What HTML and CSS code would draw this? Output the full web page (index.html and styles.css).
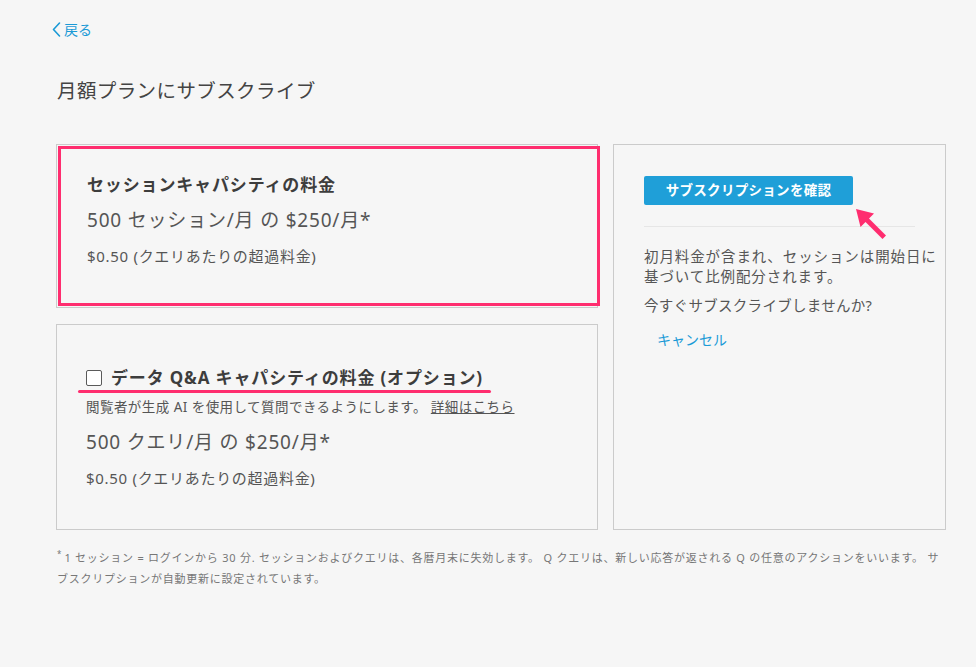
FILE: index.html
```html
<!DOCTYPE html>
<html lang="ja">
<head>
<meta charset="utf-8">
<link rel="stylesheet" href="styles.css">
</head>
<body>
<div class="page">
  <a class="back" href="#">
    <svg class="back-icon" width="9" height="15" viewBox="0 0 9 15"><path d="M7.5 1 L1.5 7.5 L7.5 14" fill="none" stroke="#1a9ad6" stroke-width="1.6" stroke-linecap="round" stroke-linejoin="round"/></svg>
    <span>戻る</span>
  </a>
  <h1 class="title">月額プランにサブスクライブ</h1>

  <div class="layout">
    <div class="left">
      <div class="card card-session">
        <div class="highlight"></div>
        <div class="card-title">セッションキャパシティの料金</div>
        <div class="price">500 セッション/月 の $250/月*</div>
        <div class="overage">$0.50 (クエリあたりの超過料金)</div>
      </div>
      <div class="card card-qa">
        <div class="check-row">
          <span class="checkbox"></span>
          <span class="card-title">データ Q&amp;A キャパシティの料金 (オプション)</span>
          <span class="underline"></span>
        </div>
        <div class="desc">閲覧者が生成 AI を使用して質問できるようにします。 <a class="more" href="#">詳細はこちら</a></div>
        <div class="price">500 クエリ/月 の $250/月*</div>
        <div class="overage">$0.50 (クエリあたりの超過料金)</div>
      </div>
    </div>

    <div class="card side">
      <button class="confirm">サブスクリプションを確認</button>
      <svg class="arrow" width="40" height="40" viewBox="0 0 40 40"><path d="M1 1 L19 5.5 L14 10.5 L31 27.5 L27.5 31 L10.5 14 L5.5 19 Z" fill="#ff2d6f"/></svg>
      <hr class="sep">
      <p class="note">初月料金が含まれ、セッションは開始日に<br>基づいて比例配分されます。</p>
      <p class="note short">今すぐサブスクライブしませんか?</p>
      <a class="cancel" href="#">キャンセル</a>
    </div>
  </div>

  <p class="footnote"><span class="star">*</span>1 セッション = ログインから 30 分. セッションおよびクエリは、各暦月末に失効します。 Q クエリは、新しい応答が返される Q の任意のアクションをいいます。 サ<br>ブスクリプションが自動更新に設定されています。</p>
</div>
</body>
</html>
```

FILE: styles.css
```css
* { box-sizing: border-box; }
html, body {
  margin: 0;
  padding: 0;
  background: #f6f6f6;
}
body {
  font-family: "Noto Sans", "Noto Sans CJK JP", sans-serif;
  color: #444;
  width: 976px;
  height: 667px;
  overflow: hidden;
}
.page {
  padding: 20px 0 0 56px;
}
.back {
  display: inline-flex;
  align-items: center;
  gap: 3px;
  margin-left: -4px;
  color: #1a9ad6;
  text-decoration: none;
  font-size: 14px;
  line-height: 18px;
}
.back-icon { display: block; }
.title {
  margin: 36px 0 0 1px;
  font-size: 19.5px;
  font-weight: 400;
  line-height: 26px;
  color: #444;
  letter-spacing: 0.4px;
}
.layout {
  margin-top: 40px;
  display: grid;
  grid-template-columns: 542px 333px;
  column-gap: 15px;
}
.left {
  display: flex;
  flex-direction: column;
  gap: 16px;
}
.card {
  position: relative;
  border: 1px solid #cbcbcb;
  background: #f6f6f6;
}
.card-session {
  height: 164px;
  padding: 28px 30px 0 30px;
}
.highlight {
  position: absolute;
  top: 1px;
  left: 1px;
  right: -3px;
  bottom: 1px;
  border: 3px solid #ff2d6f;
  pointer-events: none;
}
.card-title {
  font-size: 17px;
  font-weight: 700;
  line-height: 24px;
  color: #3d3d3d;
  letter-spacing: 0.85px;
}
.price {
  font-size: 19px;
  line-height: 24px;
  color: #555;
  margin-top: 11px;
  letter-spacing: 0.8px;
}
.overage {
  font-size: 15px;
  line-height: 20px;
  color: #555;
  margin-top: 14px;
  letter-spacing: 0.7px;
}
.card-qa {
  height: 206px;
  padding: 41px 30px 0 29px;
}
.check-row {
  position: relative;
  display: flex;
  align-items: center;
  gap: 9px;
}
.checkbox {
  width: 16px;
  height: 16px;
  border: 1.5px solid #5a5a5a;
  border-radius: 2px;
  background: #fff;
  flex: none;
}
.underline {
  position: absolute;
  left: -8px;
  width: 413px;
  top: 24px;
  height: 3px;
  border-radius: 2px;
  background: #ff2d6f;
}
.desc {
  margin-top: 8px;
  font-size: 13.5px;
  line-height: 18px;
  color: #555;
  letter-spacing: 0.45px;
}
.more {
  color: #555;
  text-decoration: underline;
}
.card-qa .price { margin-top: 14px; }
.card-qa .overage { margin-top: 14px; }

.side {
  height: 386px;
  padding: 31px 30px 0 30px;
}
.confirm {
  display: block;
  width: 209px;
  height: 29px;
  border: none;
  border-radius: 2px;
  background: #1f9fd8;
  color: #fff;
  font-family: "Noto Sans", "Noto Sans CJK JP", sans-serif;
  font-size: 13.5px;
  font-weight: 700;
  line-height: 29px;
  letter-spacing: 0.3px;
  padding: 0;
}
.arrow {
  position: absolute;
  left: 241px;
  top: 63px;
}
.sep {
  margin: 21px 0 0 0;
  border: none;
  border-top: 1px solid #e6e6e6;
  height: 0;
}
.note {
  margin: 19px 0 0 0;
  font-size: 14.5px;
  line-height: 20px;
  color: #555;
  letter-spacing: 0.9px;
  white-space: nowrap;
}
.note.short { letter-spacing: 0.3px; }
.note + .note { margin-top: 9px; }
.cancel {
  display: inline-block;
  margin: 15px 0 0 13px;
  font-size: 14px;
  line-height: 20px;
  color: #1a9ad6;
  text-decoration: none;
}
.footnote {
  margin: 17px 0 0 1px;
  width: 910px;
  font-size: 11px;
  line-height: 21px;
  color: #777;
  letter-spacing: 0.75px;
}
.star {
  display: inline-block;
  font-size: 8px;
  line-height: 8px;
  vertical-align: 5px;
  margin-right: 3px;
  letter-spacing: 0;
}
```
